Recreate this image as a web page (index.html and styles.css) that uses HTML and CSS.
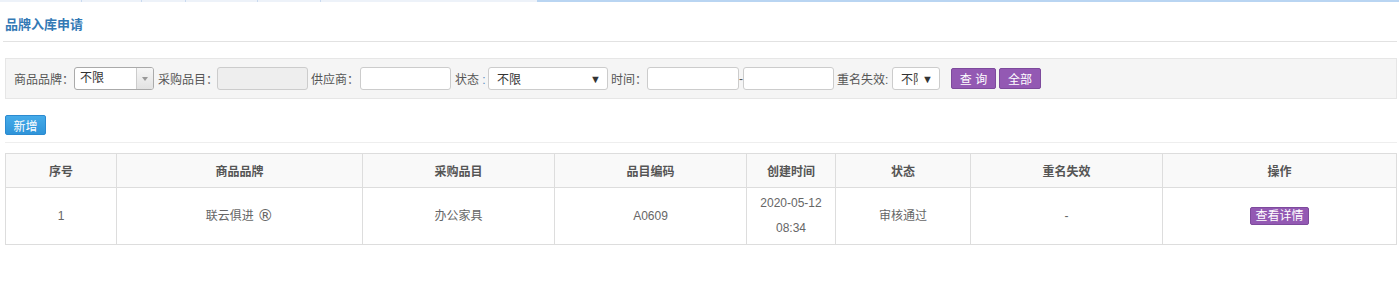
FILE: index.html
```html
<!DOCTYPE html>
<html lang="zh-CN">
<head>
<meta charset="utf-8">
<title>品牌入库申请</title>
<link rel="stylesheet" href="styles.css">
</head>
<body>
<div class="topstrip">
  <span class="seg s1"></span><span class="seg s2"></span><span class="seg s3"></span><span class="seg s4"></span><span class="seg s5"></span><span class="seg s6"></span><span class="seg active"></span>
</div>
<div class="page">
  <h2 class="title">品牌入库申请</h2>
  <div class="filter">
    <label class="lbl w-brand">商品品牌<span class="colon">：</span></label>
    <div class="combo"><span class="combo-text">不限</span><span class="combo-arrow"><i></i></span></div>
    <label class="lbl w-cat">采购品目<span class="colon">：</span></label>
    <input class="inp disabled m3" type="text" disabled>
    <label class="lbl w-sup">供应商<span class="colon">：</span></label>
    <input class="inp m4" type="text">
    <label class="lbl w-st">状态 <span class="colon-blue">:</span></label>
    <div class="sel sel-status"><span>不限</span><b>▼</b></div>
    <label class="lbl w-time">时间<span class="colon">：</span></label>
    <input class="inp inp-time" type="text"><span class="dash">-</span><input class="inp m3" type="text">
    <label class="lbl w-dup">重名失效:</label>
    <div class="sel sel-dup"><span>不限</span><b>▼</b></div>
    <button class="btn btn-purple btn-q">查 询</button>
    <button class="btn btn-purple btn-all">全部</button>
  </div>
  <div class="toolbar">
    <button class="btn btn-blue">新增</button>
  </div>
  <table class="grid">
    <colgroup>
      <col class="c1"><col class="c2"><col class="c3"><col class="c4"><col class="c5"><col class="c6"><col class="c7"><col>
    </colgroup>
    <thead>
      <tr><th>序号</th><th>商品品牌</th><th>采购品目</th><th>品目编码</th><th>创建时间</th><th>状态</th><th>重名失效</th><th>操作</th></tr>
    </thead>
    <tbody>
      <tr>
        <td>1</td>
        <td>联云俱进 <span class="reg">®</span></td>
        <td>办公家具</td>
        <td>A0609</td>
        <td>2020-05-12<br>08:34</td>
        <td>审核通过</td>
        <td>-</td>
        <td><button class="btn btn-purple btn-sm">查看详情</button></td>
      </tr>
    </tbody>
  </table>
</div>
</body>
</html>
```
FILE: styles.css
```css
* { box-sizing: border-box; }
html, body { margin: 0; padding: 0; background: #fff; }
body {
  font-family: "Liberation Sans", Arial, "Noto Sans CJK SC", sans-serif;
  font-size: 12px;
  color: #555;
}
.topstrip { display: flex; height: 2px; }
.seg { height: 2px; background: #edf2f9; border-right: 1px solid #c9daf0; }
.s1 { width: 82px; } .s2 { width: 60px; } .s3 { width: 44px; } .s4 { width: 72px; } .s5 { width: 63px; } .s6 { width: 216px; border-right: none; }
.seg.active { flex: 1; background: #b9d5f2; border: none; }

.page { padding: 0 2px 0 5px; }
.title {
  margin: 0 0 0 -2px;
  padding: 14px 0 7px 2px;
  font-size: 13px;
  line-height: 18px;
  font-weight: bold;
  color: #3379b5;
  border-bottom: 1px solid #e2e2e2;
}
.filter {
  margin-top: 16px;
  height: 41px;
  background: #f5f5f5;
  border: 1px solid #e6e6e6;
  display: flex;
  align-items: center;
  padding: 0 0 0 8px;
}
.lbl { color: #555; white-space: nowrap; flex: none; display: block; }
.colon { font-family: "Noto Sans CJK JP", sans-serif; }
.colon-blue { color: #5b8fc4; }
.w-brand { width: 60px; }
.w-cat { width: 59px; }
.w-sup { width: 49px; }
.w-st { width: 33px; }
.w-time { width: 36px; }
.w-dup { width: 55px; }

.combo {
  width: 80px; height: 23px; margin-right: 4px; flex: none;
  display: flex; border: 1px solid #aaa; border-radius: 3px; background: #fff; overflow: hidden;
}
.combo-text { flex: 1; padding-left: 5px; line-height: 21px; color: #333; }
.combo-arrow {
  width: 17px; border-left: 1px solid #ccc; background: linear-gradient(#f6f6f6, #e2e2e2);
  display: flex; align-items: center; justify-content: center;
}
.combo-arrow i { width: 0; height: 0; border-left: 3px solid transparent; border-right: 3px solid transparent; border-top: 4px solid #999; }
.inp {
  width: 91px; height: 23px; border: 1px solid #ccc; border-radius: 3px; background: #fff;
  margin: 0; padding: 0 4px; font: inherit; flex: none;
}
.inp.disabled { background: #eeeeee; }
.m3 { margin-right: 3px; }
.m4 { margin-right: 4px; }
.inp-time { width: 92px; }
.dash { color: #555; width: 4px; flex: none; }
.sel {
  height: 23px; border: 1px solid #ccc; border-radius: 3px; background: #fff; flex: none;
  display: flex; align-items: center; padding: 0 6px 0 8px; overflow: hidden;
}
.sel span { flex: 1; color: #333; white-space: nowrap; overflow: hidden; }
.sel b { font-weight: normal; font-size: 11px; color: #333; }
.sel-status { width: 120px; margin-right: 3px; }
.sel-dup { width: 48px; margin-right: 11px; }
.sel-dup span { flex: none; width: 17px; }
.sel-dup b { margin-left: auto; }
.btn {
  font-family: inherit; font-size: 12px; color: #fff; border: none; border-radius: 2px;
  padding: 0; cursor: pointer; flex: none;
}
.btn-purple {
  background: #9359b3; border: 1px solid #7d4a9c; height: 21px;
}
.btn-q { width: 45px; margin-right: 3px; }
.btn-all { width: 42px; }
.toolbar {
  padding: 16px 0 7px 0;
  border-bottom: 1px solid #eeeeee;
  display: flex;
}
.btn-blue {
  background: linear-gradient(#45abe9, #2f94d9); border: 1px solid #2b8ad0; height: 20px; width: 41px; border-radius: 2px;
}
.grid {
  margin-top: 10px;
  width: 1392px;
  border-collapse: collapse;
  table-layout: fixed;
}
.c1 { width: 111px; } .c2 { width: 246px; } .c3 { width: 192px; } .c4 { width: 192px; }
.c5 { width: 89px; } .c6 { width: 135px; } .c7 { width: 192px; }
.grid th, .grid td { border: 1px solid #dddddd; text-align: center; }
.grid th { background: #f9f9f9; height: 34px; font-weight: bold; color: #555; padding: 0 4px; }
.grid td { height: 57px; line-height: 25px; color: #666; padding: 3px 4px; }
.reg { font-family: "DejaVu Sans", sans-serif; font-size: 16px; line-height: 12px; vertical-align: -1px; }
.btn-sm { height: 18px; padding: 0 4px; font-size: 12px; line-height: 16px; }
```
